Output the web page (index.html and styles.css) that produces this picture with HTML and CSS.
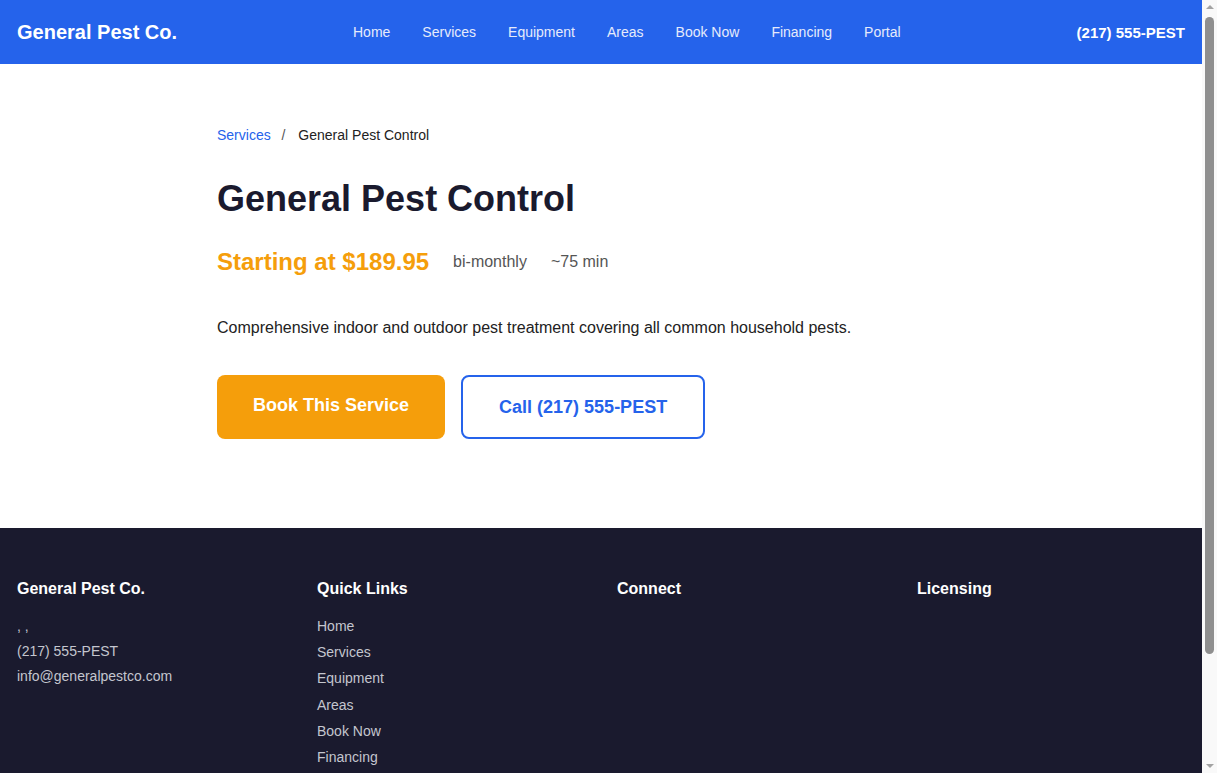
FILE: index.html
```html
<!DOCTYPE html>
<html lang="en">
<head>
<meta charset="utf-8">
<title>General Pest Control - General Pest Co.</title>
<link rel="stylesheet" href="styles.css">
</head>
<body>
<div class="page">
<header class="site-header">
  <a class="brand" href="#">General Pest Co.</a>
  <nav class="main-nav">
    <a href="#">Home</a>
    <a href="#">Services</a>
    <a href="#">Equipment</a>
    <a href="#">Areas</a>
    <a href="#">Book Now</a>
    <a href="#">Financing</a>
    <a href="#">Portal</a>
  </nav>
  <a class="header-phone" href="#">(217) 555-PEST</a>
</header>

<main class="service">
  <div class="container">
    <div class="breadcrumb">
      <a href="#">Services</a>
      <span class="sep">/</span>
      <span>General Pest Control</span>
    </div>
    <h1 class="title">General Pest Control</h1>
    <div class="meta">
      <span class="price">Starting at $189.95</span>
      <span class="meta-item">bi-monthly</span>
      <span class="meta-item">~75 min</span>
    </div>
    <p class="desc">Comprehensive indoor and outdoor pest treatment covering all common household pests.</p>
    <div class="actions">
      <a class="btn btn-primary" href="#">Book This Service</a>
      <a class="btn btn-outline" href="#">Call (217) 555-PEST</a>
    </div>
  </div>
</main>

<footer class="site-footer">
  <div class="footer-grid">
    <div class="footer-col">
      <h3>General Pest Co.</h3>
      <p class="contact">, ,</p>
      <p class="contact">(217) 555-PEST</p>
      <p class="contact">info@generalpestco.com</p>
    </div>
    <div class="footer-col">
      <h3>Quick Links</h3>
      <ul class="links">
        <li><a href="#">Home</a></li>
        <li><a href="#">Services</a></li>
        <li><a href="#">Equipment</a></li>
        <li><a href="#">Areas</a></li>
        <li><a href="#">Book Now</a></li>
        <li><a href="#">Financing</a></li>
        <li><a href="#">Portal</a></li>
      </ul>
    </div>
    <div class="footer-col">
      <h3>Connect</h3>
    </div>
    <div class="footer-col">
      <h3>Licensing</h3>
    </div>
  </div>
  <div class="copyright">&copy; 2025 General Pest Co. All rights reserved.</div>
</footer>
</div>
<aside class="scrollbar" aria-hidden="true">
  <span class="sb-arrow sb-up"></span>
  <span class="sb-thumb"></span>
  <span class="sb-arrow sb-down"></span>
</aside>
</body>
</html>
```

FILE: styles.css
```css
* { box-sizing: border-box; }
html, body { margin: 0; padding: 0; }
body {
  font-family: "Liberation Sans", Arial, sans-serif;
  color: #1a1a2e;
  background: #ffffff;
  display: flex;
  height: 100vh;
  overflow: hidden;
}
a { text-decoration: none; }

.page {
  flex: 1;
  min-width: 0;
  overflow: hidden;
}

/* static scrollbar look */
.scrollbar {
  flex: none;
  width: 15px;
  height: 100vh;
  background: #f9f9f9;
  display: flex;
  flex-direction: column;
  align-items: center;
}
.sb-arrow {
  width: 0;
  height: 0;
  border-left: 4px solid transparent;
  border-right: 4px solid transparent;
}
.sb-up {
  border-bottom: 4px solid #a3a3a3;
  margin: 5px 0 8px;
}
.sb-thumb {
  width: 9px;
  height: 637px;
  border-radius: 5px;
  background: #8f8f8f;
}
.sb-down {
  border-top: 4px solid #a3a3a3;
  margin: auto 0 5px;
}

.site-header {
  height: 64px;
  background: #2563eb;
  display: flex;
  align-items: center;
  justify-content: space-between;
  padding: 0 17px;
}
.brand {
  color: #ffffff;
  font-weight: 700;
  font-size: 20px;
}
.main-nav {
  display: flex;
  gap: 32px;
}
.main-nav a {
  color: #e6ebfb;
  font-size: 14px;
}
.header-phone {
  color: #ffffff;
  font-weight: 700;
  font-size: 15px;
}

.service {
  padding: 61px 0 89px;
}
.container {
  max-width: 768px;
  margin: 0 auto;
}
.breadcrumb {
  font-size: 14px;
  line-height: 20px;
  color: #222;
}
.breadcrumb a { color: #2563eb; }
.breadcrumb .sep { margin: 0 8px 0 7px; color: #555; }
.breadcrumb .sep + span { margin-left: 1px; }
.title {
  margin: 32px 0 0;
  font-size: 36px;
  line-height: 44px;
  font-weight: 700;
  color: #1a1a2e;
}
.meta {
  margin-top: 27px;
  display: flex;
  align-items: center;
  gap: 24px;
}
.price {
  color: #f59e0b;
  font-size: 24px;
  font-weight: 700;
}
.meta-item {
  color: #555;
  font-size: 16px;
}
.desc {
  margin: 40px 0 0;
  font-size: 16px;
  line-height: 24px;
  color: #222;
}
.actions {
  margin-top: 35px;
  display: flex;
  gap: 16px;
}
.btn {
  display: inline-flex;
  align-items: center;
  justify-content: center;
  height: 64px;
  padding: 0 36px;
  border-radius: 8px;
  font-size: 18px;
  font-weight: 700;
  white-space: nowrap;
}
.btn-primary {
  background: #f59e0b;
  color: #ffffff;
  padding-bottom: 4px;
}
.btn-outline {
  background: #ffffff;
  color: #2563eb;
  border: 2px solid #2563eb;
}

.site-footer {
  background: #1a1a2e;
  color: #ffffff;
  padding: 49px 17px 32px;
}
.footer-grid {
  display: grid;
  grid-template-columns: repeat(4, 1fr);
  gap: 32px;
}
.footer-col h3 {
  margin: 0 0 16px;
  font-size: 16px;
  line-height: 24px;
  font-weight: 700;
  color: #ffffff;
}
.contact {
  margin: 0 0 6px;
  font-size: 14px;
  line-height: 19px;
  color: #c4c6cf;
}
.links {
  list-style: none;
  margin: 0;
  padding: 0;
}
.links li {
  margin-bottom: 8px;
  line-height: 18.2px;
}
.links a {
  font-size: 14px;
  color: #c4c6cf;
}
.copyright {
  margin-top: 32px;
  padding-top: 20px;
  border-top: 1px solid #2d2e45;
  font-size: 13px;
  color: #8a8c99;
  text-align: center;
}
```
